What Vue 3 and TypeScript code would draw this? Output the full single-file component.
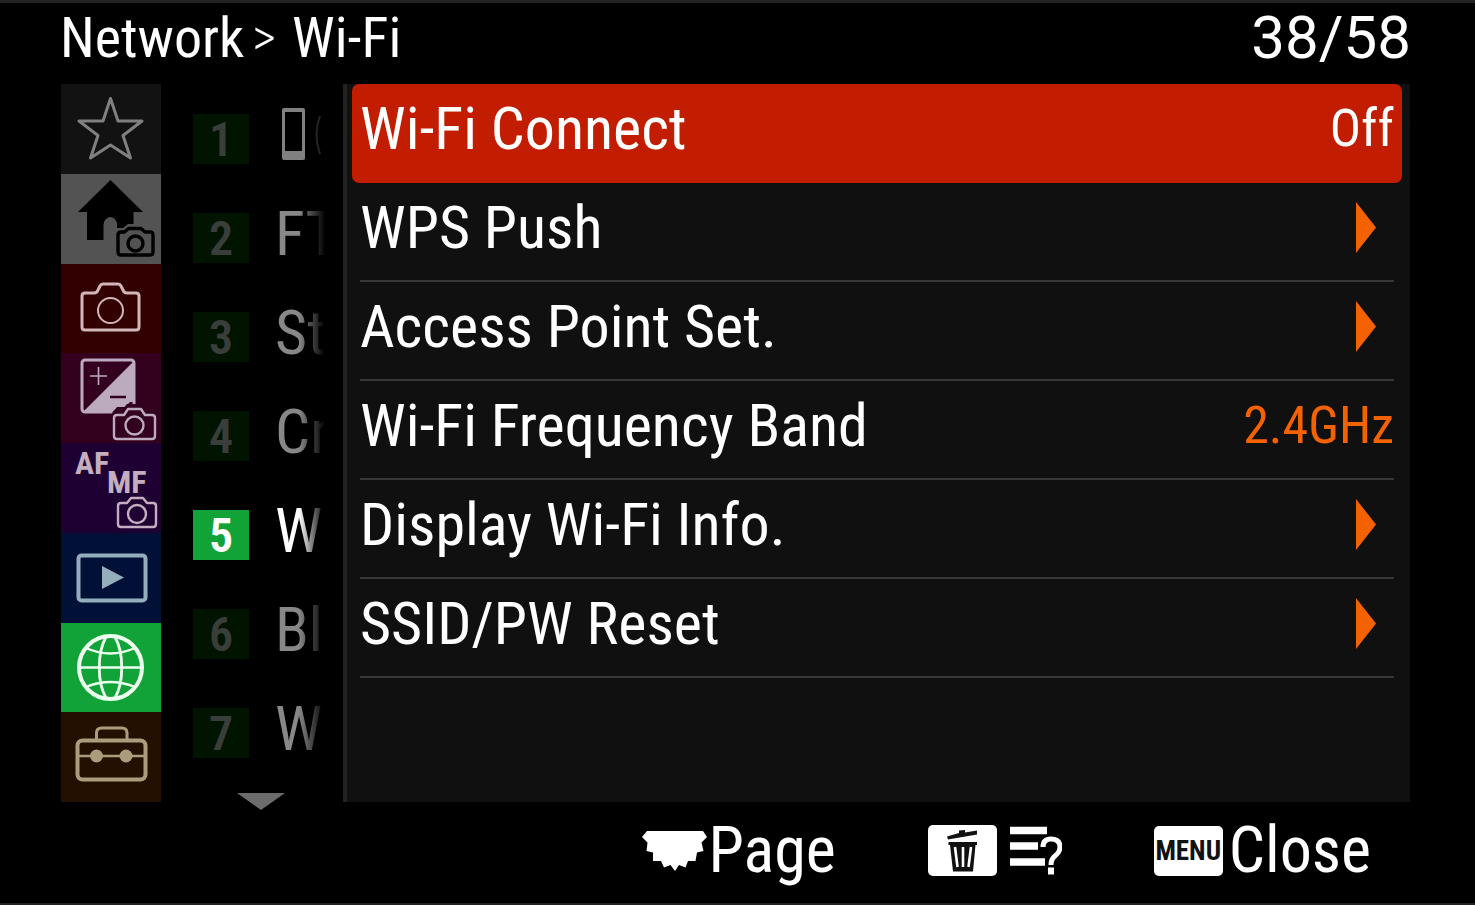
<script setup lang="ts">
import { ref } from 'vue'

interface SubItem {
  no: number
  label: string
}

interface Setting {
  name: string
  value?: string
}

const tabs = ['favorites', 'main', 'shooting', 'exposure', 'focus', 'playback', 'network', 'setup']
const activeTab = ref('network')

const subItems: SubItem[] = [
  { no: 1, label: '' },
  { no: 2, label: 'FT' },
  { no: 3, label: 'St' },
  { no: 4, label: 'Cr' },
  { no: 5, label: 'W' },
  { no: 6, label: 'Bl' },
  { no: 7, label: 'W' },
]
const activeSub = ref(5)

const settings: Setting[] = [
  { name: 'Wi-Fi Connect', value: 'Off' },
  { name: 'WPS Push' },
  { name: 'Access Point Set.' },
  { name: 'Wi-Fi Frequency Band', value: '2.4GHz' },
  { name: 'Display Wi-Fi Info.' },
  { name: 'SSID/PW Reset' },
]
const selected = ref(0)
</script>

<template>
  <div class="screen">
    <header class="top">
      <h1 class="crumbs">
        <span>Network</span>
        <span class="sep">&gt;</span>
        <span>Wi-Fi</span>
      </h1>
      <span class="count">38/58</span>
    </header>

    <main class="content">
      <nav class="tabs">
        <button
          v-for="tab in tabs"
          :key="tab"
          type="button"
          class="tab"
          :class="[tab, { active: tab === activeTab }]"
          :aria-label="tab"
          @click="activeTab = tab"
        >
          <svg viewBox="0 0 100 89" fill="none" stroke="currentColor" stroke-width="3" stroke-linejoin="round">
            <path
              v-if="tab === 'favorites'"
              d="M49.500 14.500L57 37H81L62 51.500L69.500 74L49.500 61L29.500 74L37 51.500L18 37H42Z"
            />
            <template v-else-if="tab === 'main'">
              <path
                fill="currentColor"
                stroke="none"
                d="M49.500 6L82 38H72.500V50H67L62 54H56V49Q54 43 49 43Q43 44 42.500 51V66H26V38H17Z"
              />
              <path d="M59 58H63.500L67.500 54.500H80L84 58H89Q92 58 92 61V78Q92 81 89 81H60Q57 81 57 78V61Q57 58 60 58Z" stroke-width="3.400" />
              <circle cx="74.500" cy="69.500" r="7.500" stroke-width="3.400" />
            </template>
            <template v-else-if="tab === 'shooting'">
              <path d="M24 29H33Q36 29 37 26L39 22Q40 20 42 20H57Q59 20 60 22L62 26Q63 29 66 29H75Q78 29 78 32V63Q78 66 75 66H24Q21 66 21 63V32Q21 29 24 29Z" />
              <circle cx="49.500" cy="46.500" r="12.500" stroke-width="2" />
            </template>
            <template v-else-if="tab === 'exposure'">
              <rect x="21" y="6" width="52" height="52" rx="3" />
              <path d="M73 7V48H69L64 53H56L52 58H22Z" fill="currentColor" stroke="none" />
              <path d="M29 22H46M37.500 13V31" stroke-width="1.600" />
              <path class="cut" d="M49 43H65" stroke-width="2.500" />
              <path class="cut-fill" stroke="none" d="M50 61L53 56H61L66 50H80V62H50Z" />
              <path d="M56 61H63L67 55H80L84 61H91Q94 61 94 64V82Q94 85 91 85H56Q53 85 53 82V64Q53 61 56 61Z" stroke-width="2.400" />
              <circle cx="73.500" cy="71.500" r="9" stroke-width="2.400" />
            </template>
            <template v-else-if="tab === 'focus'">
              <text class="mode" x="14" y="31">AF</text>
              <text class="mode" x="46" y="50">MF</text>
              <path d="M60 60H66L70 55H82L86 60H92Q95 60 95 63V81Q95 84 92 84H60Q57 84 57 81V63Q57 60 60 60Z" stroke-width="2.400" />
              <circle cx="76" cy="71" r="9" stroke-width="2.400" />
            </template>
            <template v-else-if="tab === 'playback'">
              <rect x="17.500" y="22.500" width="67" height="45" rx="3" stroke-width="4" />
              <path d="M41 33L63 44.500L41 56Z" fill="currentColor" stroke="none" />
            </template>
            <template v-else-if="tab === 'network'">
              <circle cx="49.500" cy="44.500" r="31.500" stroke-width="4" />
              <path d="M18 44.500H81M25 25Q49 36 74 25M25 64Q49 54 74 64" stroke-width="2.400" />
              <path d="M45 14C36 30 36 59 45 75M54 14C63 30 63 59 54 75" stroke-width="2.800" />
            </template>
            <template v-else>
              <path d="M35.500 27V20Q35.500 15 40.500 15H61Q66 15 66 20V27" />
              <rect x="16.500" y="27.500" width="68" height="39" rx="5" stroke-width="4" />
              <path d="M17 43H84" stroke-width="2.500" />
              <circle cx="35.500" cy="43" r="6.500" fill="currentColor" stroke="none" />
              <circle cx="65" cy="43" r="6.500" fill="currentColor" stroke="none" />
            </template>
          </svg>
        </button>
      </nav>

      <div class="sub">
        <button
          v-for="item in subItems"
          :key="item.no"
          type="button"
          class="sub-item"
          :class="{ current: item.no === activeSub }"
          @click="activeSub = item.no"
        >
          <span class="badge">{{ item.no }}</span>
          <span v-if="item.label" class="sub-label">{{ item.label }}</span>
          <svg v-else class="phone" viewBox="0 0 46 54" fill="none">
            <path d="M9 1H28Q30 1 30 3V51Q30 53 28 53H9Q7 53 7 51V3Q7 1 9 1ZM10 5V44H27V5Z" fill="#808080" fill-rule="evenodd" />
            <path d="M45 9Q38 28 45 47" stroke="#242424" stroke-width="2" />
          </svg>
        </button>
        <svg class="more" viewBox="0 0 48 17"><path d="M0 0H48L24 17Z" fill="#6c6c6c" /></svg>
      </div>

      <section class="panel">
        <button
          v-for="(s, i) in settings"
          :key="s.name"
          type="button"
          class="row"
          :class="{ selected: i === selected }"
          @click="selected = i"
        >
          <span>{{ s.name }}</span>
          <span v-if="s.value" class="value">{{ s.value }}</span>
          <svg v-else class="arrow" viewBox="0 0 20 51"><path d="M0 0L20 25.500L0 51Z" fill="#f46200" /></svg>
        </button>
      </section>
    </main>

    <footer class="foot">
      <button type="button" class="action page">
        <svg class="dial" viewBox="0 0 65 40">
          <path
            d="M5 0H61L65 6L59.500 11.500L61.500 20L55 21.500L53.500 30H46L43.500 36.500L37 34L33 40L28.500 34L22 36.500L19 30H11V21.500L4.500 20L5.500 11.500L0 6Z"
            fill="#fff"
          />
        </svg>
        <span>Page</span>
      </button>
      <button type="button" class="action help" aria-label="Help">
        <svg class="trash" viewBox="0 0 69 51">
          <rect width="69" height="51" rx="5" fill="#fff" />
          <path d="M19 11.500L31 8V5.500L37 5V7.500L49 5.500V9.500L20 14.500ZM20.500 17H49V20H47.500L45 46.500H25L22 20H20.500Z" fill="#111" />
          <path d="M27 22L29.500 42M35 22V42M43 22L40.500 42" stroke="#fff" stroke-width="2.600" />
        </svg>
        <svg class="guide" viewBox="0 0 52 49" fill="none" stroke="#fff">
          <path d="M0 4.500H37M0 20H28M0 36H35" stroke-width="7.500" />
          <path d="M33 21Q33 13 41 13Q50 13 50 21Q50 26 45 30Q41 33 41 39" stroke-width="5" />
          <path d="M38 45H44" stroke-width="7" />
        </svg>
      </button>
      <button type="button" class="action">
        <span class="menu-key">MENU</span>
        <span>Close</span>
      </button>
    </footer>
  </div>
</template>

<style>
body {
  margin: 0;
  background: #000;
}
</style>

<style scoped>
.screen {
  box-sizing: border-box;
  display: flex;
  flex-direction: column;
  min-height: 100vh;
  border-top: 3px solid #222;
  border-bottom: 2px solid #222;
  background: #000;
  color: #fff;
  font-family: "Roboto Condensed", "Liberation Sans Narrow", Roboto, sans-serif;
}

button {
  margin: 0;
  padding: 0;
  border: 0;
  background: none;
  color: inherit;
  font: inherit;
  text-align: left;
  cursor: pointer;
}

svg {
  display: block;
  flex: none;
}

.top {
  display: flex;
  align-items: center;
  justify-content: space-between;
  height: 69px;
  padding: 0 64px 12px 60px;
}

.crumbs {
  display: flex;
  align-items: center;
  gap: 8px;
  margin: 0;
  font-size: 56px;
  font-weight: 400;
  line-height: 68px;
}

.sep {
  margin-right: 8px;
  font-size: 52px;
  font-weight: 300;
}

.count {
  font-family: Roboto, sans-serif;
  font-size: 60px;
  line-height: 68px;
}

.content {
  display: grid;
  flex: 1;
  grid-template-columns: 100px 182px 1fr;
  padding: 0 65px 0 61px;
}

.tabs {
  display: grid;
  grid-auto-rows: 1fr;
}

.tab svg {
  width: 100%;
}

.favorites { background: #121212; color: #808080; }
.main { background: #535353; color: #000; }
.shooting { background: #330000; color: #d2b6ba; }
.exposure { background: #33001e; color: #bcaabe; }
.focus { background: #1f0033; color: #c4aebf; }
.playback { background: #001036; color: #94aebb; }
.network { background: #12a338; color: #ecffee; }
.setup { background: #241000; color: #ab9c7c; }

.cut { stroke: #33001e; }
.cut-fill { fill: #33001e; }

.mode {
  fill: currentColor;
  stroke: none;
  font-size: 32px;
  font-weight: 700;
}

.sub {
  display: flex;
  flex-direction: column;
  padding-top: 5px;
}

.sub-item {
  display: flex;
  align-items: center;
  gap: 26px;
  height: 99px;
  padding-left: 32px;
}

.badge {
  width: 56px;
  height: 50px;
  background: #001400;
  color: #3a3e3a;
  font-size: 48px;
  font-weight: 600;
  line-height: 52px;
  text-align: center;
}

.sub-label {
  padding-bottom: 8px;
  color: #888;
  font-size: 62px;
  line-height: 76px;
  white-space: nowrap;
  mask-image: linear-gradient(to right, #000 24px, transparent 50px);
}

.current .badge {
  background: #12a338;
  color: #fff;
}

.current .sub-label {
  color: #fff;
}

.phone {
  width: 46px;
  height: 54px;
  padding-bottom: 10px;
}

.more {
  width: 48px;
  height: 17px;
  margin: 11px 0 -10px 76px;
}

.panel {
  padding: 0 8px 0 5px;
  border-left: 4px solid #222;
  background: #101010;
}

.row {
  position: relative;
  display: flex;
  align-items: center;
  justify-content: space-between;
  box-sizing: border-box;
  width: 100%;
  height: 99px;
  padding: 0 8px 10px;
  font-size: 60px;
  line-height: 74px;
}

.row::after {
  position: absolute;
  right: 8px;
  bottom: 0;
  left: 8px;
  height: 2px;
  background: #383838;
  content: "";
}

.row.selected {
  border-radius: 7px;
  background: #c21d00;
}

.row.selected::after {
  display: none;
}

.value {
  color: #f46200;
  font-size: 52px;
}

.selected .value {
  color: #fff;
}

.arrow {
  width: 20px;
  height: 51px;
  margin-right: 18px;
}

.foot {
  display: flex;
  align-items: center;
  justify-content: flex-end;
  gap: 92px;
  height: 97px;
  padding: 0 104px 4px 0;
}

.action {
  display: flex;
  align-items: center;
  gap: 6px;
  font-size: 64px;
  line-height: 76px;
}

.page {
  gap: 1px;
}

.help {
  gap: 13px;
}

.dial {
  width: 65px;
  height: 40px;
}

.trash {
  width: 69px;
  height: 51px;
}

.guide {
  width: 52px;
  height: 49px;
}

.menu-key {
  width: 69px;
  border-radius: 5px;
  background: #fff;
  color: #111;
  font-size: 27px;
  font-weight: 700;
  line-height: 50px;
  text-align: center;
}
</style>
